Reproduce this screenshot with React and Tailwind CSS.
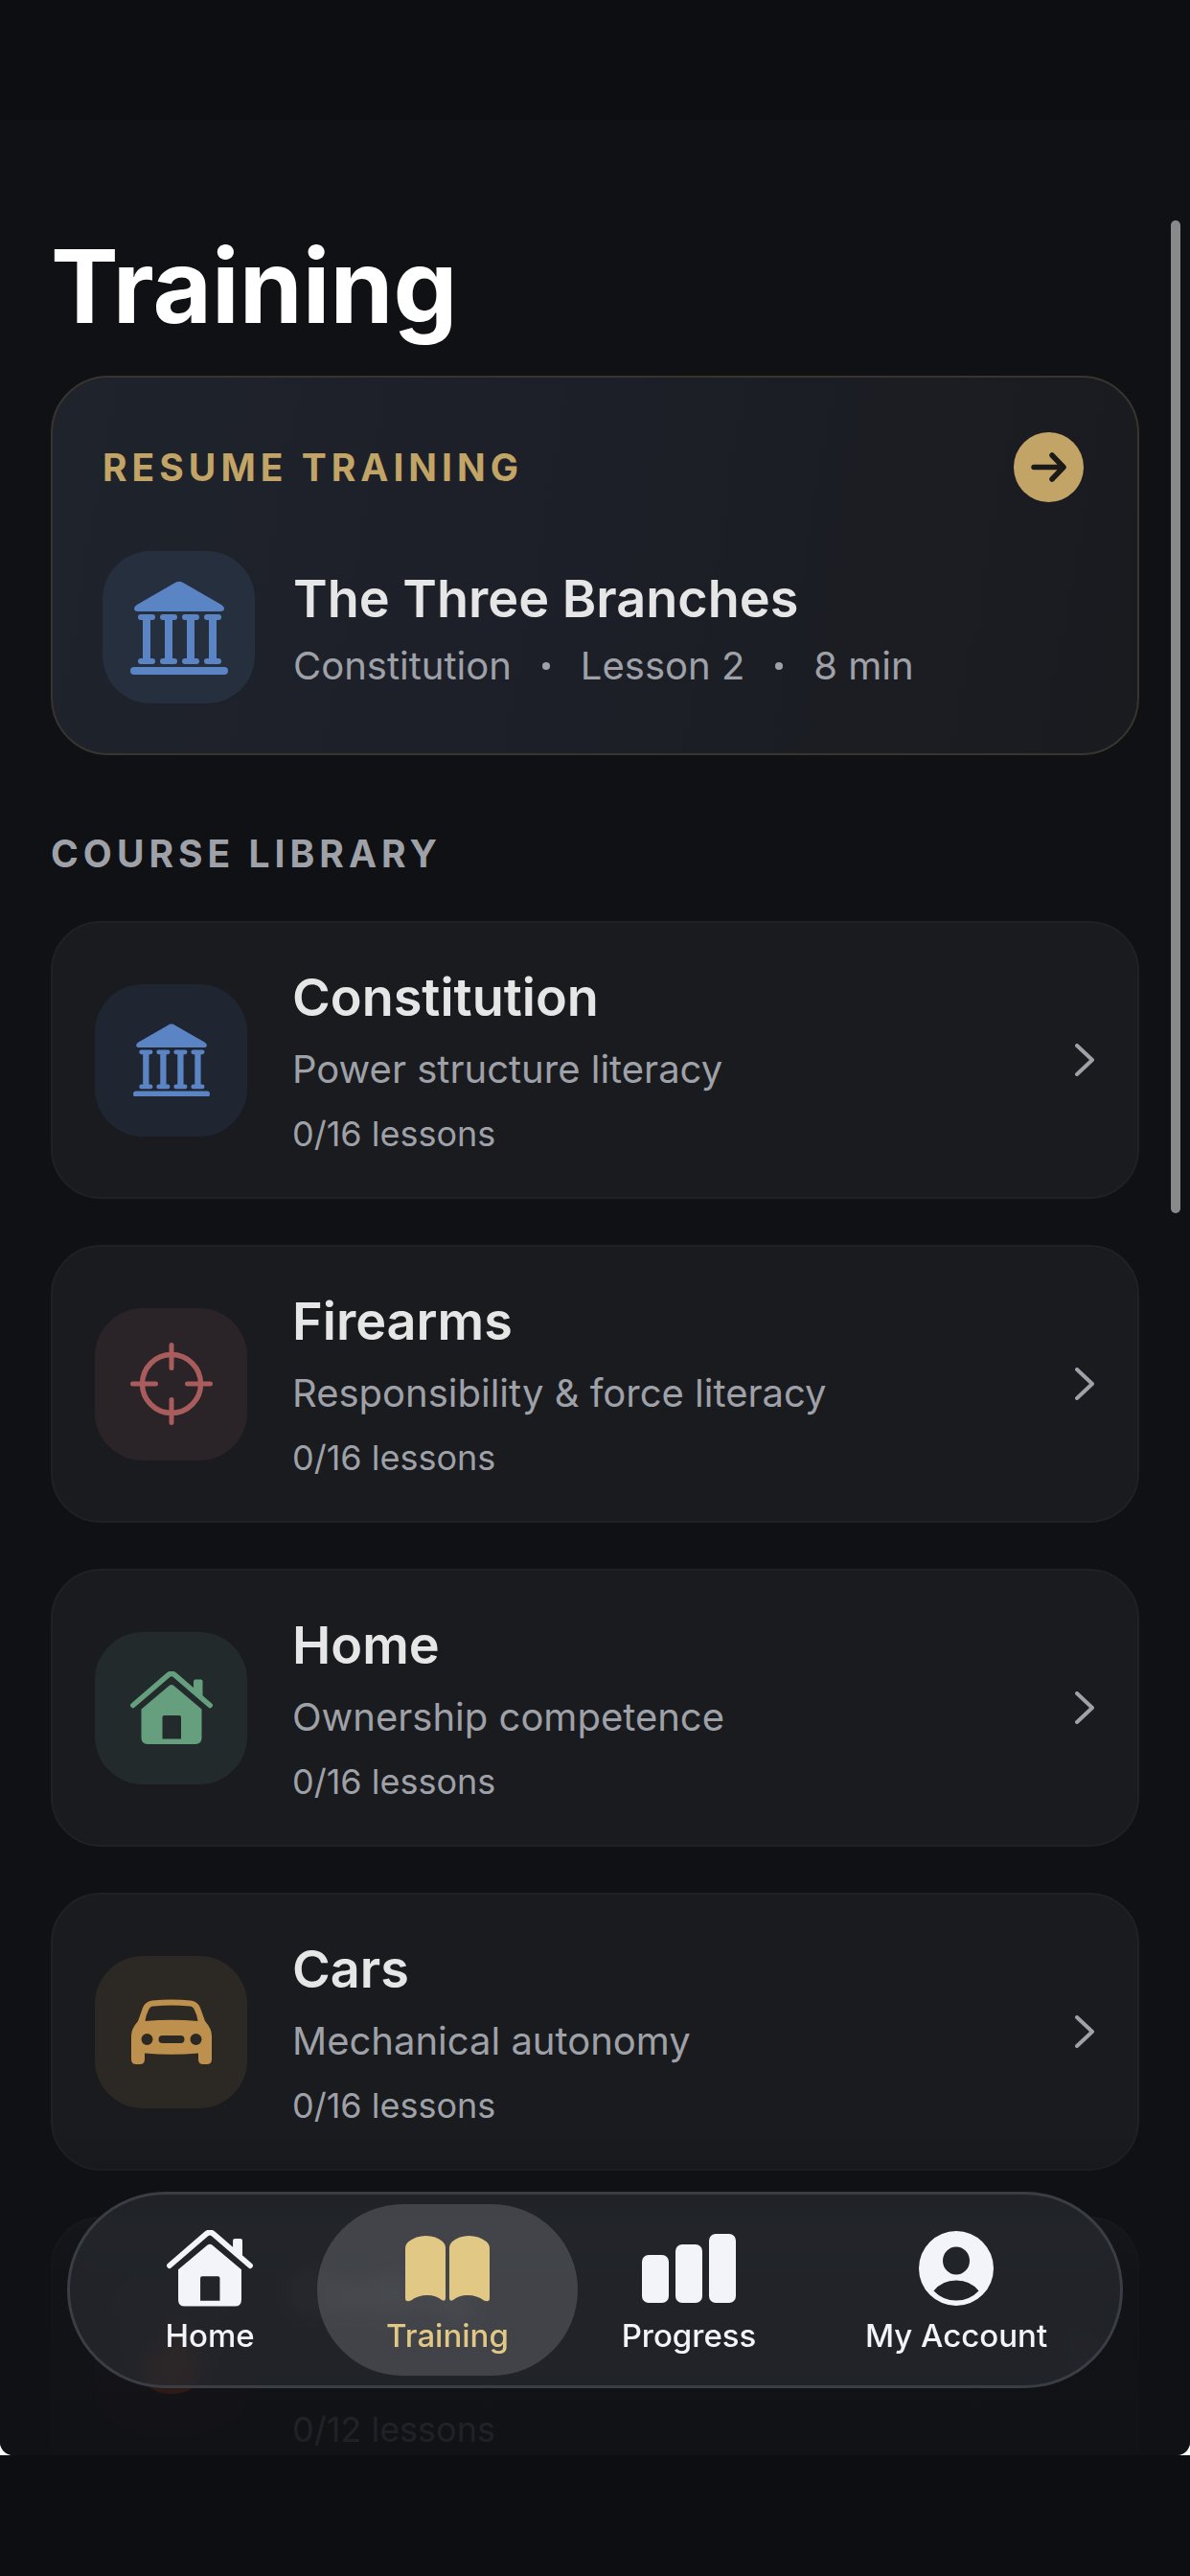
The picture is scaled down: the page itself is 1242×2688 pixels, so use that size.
const courses = [
  { id: 'constitution', title: 'Constitution', subtitle: 'Power structure literacy', lessons: '0/16 lessons', tile: 'bg-[#1f2632]', color: 'text-[#5b84c4]', icon: ColumnsIcon, iconSize: 'w-20' },
  { id: 'firearms', title: 'Firearms', subtitle: 'Responsibility & force literacy', lessons: '0/16 lessons', tile: 'bg-[#2a2327]', color: 'text-[#a85c5c]', icon: ScopeIcon, iconSize: 'w-[86px]' },
  { id: 'home', title: 'Home', subtitle: 'Ownership competence', lessons: '0/16 lessons', tile: 'bg-[#222a2b]', color: 'text-[#659f7d]', icon: HouseIcon, iconSize: 'w-[86px]' },
  { id: 'cars', title: 'Cars', subtitle: 'Mechanical autonomy', lessons: '0/16 lessons', tile: 'bg-[#2c2824]', color: 'text-[#bd904d]', icon: CarIcon, iconSize: 'w-[86px]' },
  { id: 'coding', title: 'Coding', subtitle: '', lessons: '0/12 lessons', tile: 'bg-[#2a2022]', color: 'text-[#e2541c]', icon: FlameIcon, iconSize: 'w-[66px]' },
]

const tabs = [
  { id: 'home', label: 'Home', icon: HouseIcon, iconSize: 'w-[90px]', width: 'w-[224px]' },
  { id: 'training', label: 'Training', icon: BookIcon, iconSize: 'w-[88px]', width: 'w-[272px]' },
  { id: 'progress', label: 'Progress', icon: BarsIcon, iconSize: 'w-[98px]', width: 'w-[232px]' },
  { id: 'account', label: 'My Account', icon: PersonIcon, iconSize: 'w-[78px]', width: 'w-[326px]' },
]

function ColumnsIcon({ className }) {
  return (
    <svg viewBox="0 0 102 98" className={className} fill="currentColor" aria-hidden="true">
      <path d="M46 2.5Q51 -1 56 2.5L95 25Q98 27 98 29Q98 32 94 32H8Q4 32 4 29Q4 27 7 25Z" />
      {[8, 31, 54, 77].map((x) => (
        <g key={x}>
          <rect x={x} y="35" width="18" height="6" rx="3" />
          <rect x={x + 5} y="36" width="8" height="50" />
          <rect x={x} y="81" width="18" height="6" rx="3" />
        </g>
      ))}
      <rect x="0" y="90" width="102" height="8" rx="4" />
    </svg>
  )
}

function ScopeIcon({ className }) {
  return (
    <svg viewBox="0 0 86 86" className={className} fill="none" stroke="currentColor" aria-hidden="true">
      <circle cx="43" cy="43" r="30.5" strokeWidth="5.5" />
      <path d="M43 2.5V26.5M43 59.5V83.5M2.5 43H26.5M59.5 43H83.5" strokeWidth="5" strokeLinecap="round" />
    </svg>
  )
}

function HouseIcon({ className }) {
  return (
    <svg viewBox="0 0 86 76" className={className} fill="currentColor" aria-hidden="true">
      <path
        d="M2.8 35.5L39.5 3.8Q43 .8 46.5 3.8L83.2 35.5"
        fill="none"
        stroke="currentColor"
        strokeWidth="5.5"
        strokeLinecap="round"
      />
      <path d="M66 22V10.5Q66 8.5 68 8.5H73.5Q75.5 8.5 75.5 10.5V30Z" />
      <path
        fillRule="evenodd"
        d="M11.5 39.5L40.5 15Q43 13 45.5 15L74.5 39.5V69.5Q74.5 76 68 76H18Q11.5 76 11.5 69.5ZM33.5 48V70.5H53V48Q53 46 51 46H35.5Q33.5 46 33.5 48Z"
      />
    </svg>
  )
}

function CarIcon({ className }) {
  return (
    <svg viewBox="0 0 86 68" className={className} fill="currentColor" aria-hidden="true">
      <path
        fillRule="evenodd"
        d="M23 1.5Q43 -.5 63 1.5Q70 2 73 9L78 23Q85 31 85 38V63Q85 68 80 68H76Q71 68 71 63V56.5Q43 59 15 56.5V63Q15 68 10 68H6Q1 68 1 63V38Q1 31 8 23L13 9Q16 2 23 1.5ZM24 7.5Q20.5 7.5 19 11.5Q16.5 16 15.5 23Q43 20.5 70.5 23Q69.5 16 67 11.5Q65.5 7.5 62 7.5Q43 5.5 24 7.5ZM17.500 36A6 6 0 1 0 17.5 48A6 6 0 1 0 17.5 36ZM68.5 36A6 6 0 1 0 68.5 48A6 6 0 1 0 68.5 36ZM33.5 38A4 4 0 0 0 33.5 46H52.5A4 4 0 0 0 52.5 38Z"
      />
    </svg>
  )
}

function FlameIcon({ className }) {
  return (
    <svg viewBox="0 0 66 80" className={className} fill="currentColor" aria-hidden="true">
      <path d="M28 0Q62 14 64 48Q64 80 33 80Q4 80 2 54Q2 40 11 30Q14 36 20 38Q32 22 28 0Z" />
    </svg>
  )
}

function BookIcon({ className }) {
  return (
    <svg viewBox="0 0 88 70" className={className} fill="currentColor" aria-hidden="true">
      <path d="M0 14Q0 10 3.5 7Q11 1 21.5 1Q32 1 39 7Q42 10 42 13V66Q42 70 38 68Q32 63 23 63Q13 63 6 68.5Q0 71 0 66Z" />
      <path d="M88 14Q88 10 84.5 7Q77 1 66.5 1Q56 1 49 7Q46 10 46 13V66Q46 70 50 68Q56 63 65 63Q75 63 82 68.5Q88 71 88 66Z" />
    </svg>
  )
}

function BarsIcon({ className }) {
  return (
    <svg viewBox="0 0 98 72" className={className} fill="currentColor" aria-hidden="true">
      <rect x="0" y="22" width="28" height="50" rx="7" />
      <rect x="35" y="11" width="28" height="61" rx="7" />
      <rect x="70" y="0" width="28" height="72" rx="7" />
    </svg>
  )
}

function PersonIcon({ className }) {
  return (
    <svg viewBox="0 0 78 78" className={className} fill="currentColor" aria-hidden="true">
      <path
        fillRule="evenodd"
        d="M39 0A39 39 0 1 0 39 78A39 39 0 1 0 39 0ZM39 16.5A14 14.5 0 1 1 39 45.5A14 14.5 0 1 1 39 16.5ZM15.5 62.5Q24 51.5 39 51.5Q54 51.5 62.5 62.5Q53 72.5 39 72.5Q25 72.5 15.5 62.5Z"
      />
    </svg>
  )
}

function ResumeCard() {
  return (
    <section className="mt-[26px] h-[396px] rounded-[60px] border-2 border-[#38352f] bg-linear-100 from-[#1f232b] via-[#1c1f27] to-[#1a1b1f] px-[52px] pt-[57px]">
      <div className="flex items-center justify-between pr-1">
        <h2 className="text-[39px] leading-[48px] font-bold tracking-[5px] text-[#c2a566]">RESUME TRAINING</h2>
        <button
          aria-label="Resume training"
          className="flex h-[73px] w-[73px] items-center justify-center rounded-full bg-[#c2a566] text-[#1b1a18]"
        >
          <svg viewBox="0 0 37 31" className="w-[37px]" fill="none" stroke="currentColor" strokeWidth="5.5" strokeLinecap="round" strokeLinejoin="round">
            <path d="M3 15.5H33M22 3L34 15.5L22 28" />
          </svg>
        </button>
      </div>
      <div className="mt-[51px] flex items-center gap-10">
        <div className="flex h-[159px] w-[159px] items-center justify-center rounded-[50px] bg-[#262f3e] text-[#5b84c4]">
          <ColumnsIcon className="w-[102px]" />
        </div>
        <div className="pt-[10px]">
          <h3 className="text-[54px] leading-[70px] font-semibold text-[#e6e6e7]">The Three Branches</h3>
          <p className="flex items-center gap-8 text-[40px] leading-[70px] text-[#9fa1a8]">
            <span>Constitution</span>
            <span className="h-2 w-2 rounded-full bg-[#9fa1a8]" />
            <span>Lesson 2</span>
            <span className="h-2 w-2 rounded-full bg-[#9fa1a8]" />
            <span>8 min</span>
          </p>
        </div>
      </div>
    </section>
  )
}

function CourseCard({ course }) {
  const Icon = course.icon
  return (
    <button className="flex h-[290px] w-full shrink-0 items-center rounded-[52px] border-2 border-[#202125] bg-[#1a1b1f] pr-[45px] pl-11 text-left">
      <span className={`flex h-[159px] w-[159px] items-center justify-center rounded-[50px] ${course.tile} ${course.color}`}>
        <Icon className={course.iconSize} />
      </span>
      <span className="ml-[47px] flex flex-1 flex-col pt-1">
        <span className="text-[54px] leading-[76px] font-semibold text-[#e6e6e7]">{course.title}</span>
        <span className="h-[74px] text-[40px] leading-[74px] text-[#9fa1a8]">{course.subtitle}</span>
        <span className="text-[36px] leading-[60px] text-[#9fa1a8]">{course.lessons}</span>
      </span>
      <svg viewBox="0 0 20 34" className="w-5 text-[#9fa1a8]" fill="none" stroke="currentColor" strokeWidth="4" strokeLinecap="round" strokeLinejoin="round">
        <path d="M2 2L18 17L2 32" />
      </svg>
    </button>
  )
}

function TabBar({ active }) {
  return (
    <nav className="absolute right-[70px] bottom-[70px] left-[70px] flex h-[205px] items-center rounded-full border-3 border-[#3b3d45] bg-[#2a2c32]/65 pl-[34px] backdrop-blur-[10px]">
      {tabs.map((tab) => {
        const Icon = tab.icon
        const selected = tab.id === active
        return (
          <button
            key={tab.id}
            className={`flex h-[179px] flex-col items-center justify-end rounded-full pb-5 ${tab.width} ${
              selected ? 'bg-white/15 text-[#e2c885]' : 'text-[#f3f4f9]'
            }`}
          >
            <span className="flex h-20 items-center">
              <Icon className={tab.iconSize} />
            </span>
            <span className="mt-2 text-[33px] leading-[44px] font-medium">{tab.label}</span>
          </button>
        )
      })}
    </nav>
  )
}

export default function App() {
  return (
    <div className="flex h-screen flex-col bg-[#0d0e12] pt-[125px] pb-[126px] font-[Inter,sans-serif]">
      <div className="flex min-h-0 flex-1 flex-col bg-white">
        <div className="relative flex-1 overflow-hidden rounded-b-[14px] bg-[#101115]">
          <main className="px-[53px] pt-[107px]">
            <h1 className="text-[106px] leading-[134px] font-bold text-white">Training</h1>
            <ResumeCard />
            <h2 className="mt-[79px] text-[39px] leading-[48px] font-bold tracking-[5px] text-[#9fa1a8]">COURSE LIBRARY</h2>
            <div className="mt-[46px] flex flex-col gap-12">
              {courses.map((course) => (
                <CourseCard key={course.id} course={course} />
              ))}
            </div>
          </main>
          {/* Fade the list out behind the tab bar */}
          <div className="absolute inset-x-0 bottom-0 h-[340px] bg-linear-to-b from-transparent via-[#101115]/80 via-45% to-[#101115]/90" />
          <TabBar active="training" />
          <div className="absolute top-[105px] right-[10px] h-[1036px] w-[10px] rounded-full bg-[#88898b]" />
        </div>
      </div>
    </div>
  )
}
